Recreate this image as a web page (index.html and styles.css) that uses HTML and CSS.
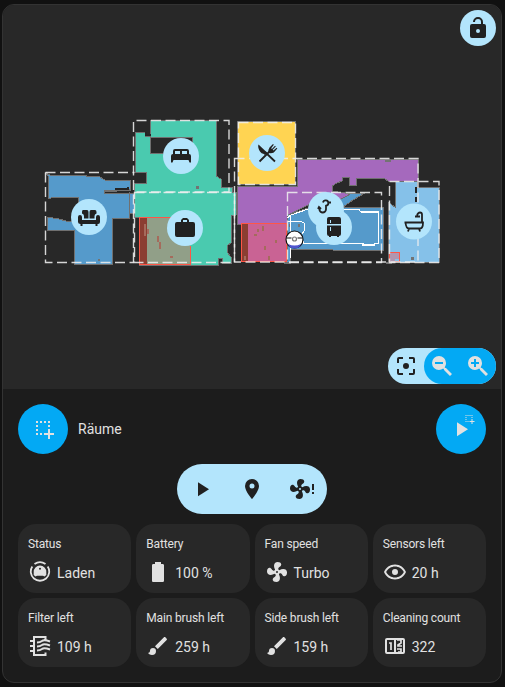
FILE: index.html
```
<!DOCTYPE html>
<html lang="de">
<head>
<meta charset="utf-8">
<title>Räume</title>
<link rel="stylesheet" href="styles.css">
</head>
<body>
<svg class="defs" width="0" height="0" aria-hidden="true">
  <symbol id="play" viewBox="0 0 24 24"><path d="M8 5.14v14l11-7z"/></symbol>
  <symbol id="fan" viewBox="0 0 24 24"><path d="M12,11A1,1 0 0,0 11,12A1,1 0 0,0 12,13A1,1 0 0,0 13,12A1,1 0 0,0 12,11M12.5,2C17,2 17.11,5.57 14.75,6.75C13.76,7.24 13.32,8.29 13.13,9.22C13.61,9.42 14.03,9.73 14.35,10.13C18.05,8.13 22.03,8.92 22.03,12.5C22.03,17 18.46,17.1 17.28,14.73C16.78,13.74 15.72,13.3 14.79,13.11C14.59,13.59 14.28,14 13.88,14.34C15.87,18.03 15.08,22 11.5,22C7,22 6.91,18.42 9.27,17.24C10.25,16.75 10.69,15.71 10.89,14.79C10.4,14.59 9.97,14.27 9.65,13.87C5.96,15.85 2,15.07 2,11.5C2,7 5.56,6.89 6.74,9.26C7.24,10.25 8.29,10.68 9.22,10.87C9.41,10.39 9.73,9.97 10.14,9.65C8.15,5.96 8.94,2 12.5,2Z"/></symbol>
  <symbol id="brush" viewBox="0 0 24 24"><path d="M20.71,4.63L19.37,3.29C19,2.9 18.35,2.9 17.96,3.29L9,12.25L11.75,15L20.71,6.04C21.1,5.65 21.1,5 20.71,4.63M7,14A3,3 0 0,0 4,17C4,18.31 2.84,19 2,19C2.92,20.22 4.5,21 6,21A4,4 0 0,0 10,17A3,3 0 0,0 7,14Z"/></symbol>
  <symbol id="select" viewBox="0 0 24 24"><path d="M5 4h2v2H5zM9 4h2v2H9zM13 4h2v2h-2zM17 4h2v2h-2zM5 8h2v2H5zM17 8h2v2h-2zM5 12h2v2H5zM17 12h2v4h4v2h-4v4h-2v-4h-4v-2h4zM5 16h2v2H5zM9 16h2v2H9z"/></symbol>
</svg>
<main class="card">
  <section class="map">
    <svg class="plan" viewBox="3 5 498 384">
      <g class="rooms">
        <path fill="#559acb" d="M45 172l5 3h36v1h12l7 4h25v9h-14v2h-12v2h31v20h-6v5h-17v46H74v-34H47v-13l12 2 7 2h12v-24H54l-6 2v-23z"/>
        <path fill="#4acaaf" fill-rule="evenodd" d="M150 120h66v56l5 3v8h11v5h4v23l-5 1v27l-4 3v6l4 5v6h-9v-5h-4v7h-79v-48h-5v-34h12v-11h-11v-40h10v4h5zM150 137v16h42v-16z"/>
        <path fill="#a569bd" d="M237 186h60v-27h121l1 22h-31l-4-3h-28v7h-7v-8h-7v4l-5 2-5 3v5l19 3-7 6-15-1-21 6-20 10v9h-51z"/>
        <path fill="#559acb" d="M288 215l20-7 28-6 16-9h13l-12 7-10 7h40v43h-50l-6-1h-37v13h-3z"/>
        <path fill="#85c1e9" d="M395 181h22v6h22v75h-51v-60l7 5z"/>
        <path fill="#ffd452" d="M237.500 121.500h58v63h-58z"/>
      </g>
      <path fill="none" stroke="#707070" d="M104 190.500h27M129.500 192v26"/>
      <path class="dust" d="M196 185.500h3v3h-3zM98 259h2v2h-2zM289 224h2v3h-2zM298 224h2v3h-2zM411 257h3v3h-3zM386 262h6v2h-6zM284 262h7v2h-7zM385 159h6v3h-6z"/>
      <path class="notch" d="M128 187v2h-13M146 132v3h5M416 187v6M416 197v5"/>
      <path fill="#8b3e32" d="M139.500 218h7v46h-7zM242 223.500h6v38h-6z"/>
      <path fill="#919f88" d="M146.500 218H190v46h-43.500z"/>
      <path fill="#c96394" d="M248 223.500h38.500v38H248z"/>
      <path class="marks" d="M145 224v12M148 229v5M158 236v6M160 242v7M170 256.500h3M263 226v5M258 232v-3M265 246v4M276 240v3M257 235h-3M269 260v-4M245 260v-4"/>
      <path class="zone" d="M190.500 245.500v19h-51v-47H173M241.500 223.500h45v38h-45zM389.500 252.500h10v9h-10z"/>
      <path fill="#b196b0" d="M390 253h9v6h-4v3h-5z"/>
      <path class="route" d="M287 218l4-3 17-6M343 209.500h16l2 2.500h17.500v31.500h-4v1.500h-11.500v-1.500H304l-3-8 3.500-5v-7l-3-2H288M290.500 216v42"/>
      <g class="bounds">
        <path d="M45.500 172.500h89M45.500 172.500v90H134"/>
        <path d="M133.500 262.500v-142h95.500V192h-94.500"/>
        <path d="M134.500 192.500h100v70h-100z"/>
        <path d="M238.500 122.500h57v62h-57z"/>
        <path d="M234.500 158.500H418v103.500H234.500z"/>
        <path d="M287.500 192.500h94v70h-94z"/>
        <path d="M389.500 181.500h49.500v81h-49.500z"/>
      </g>
      <g class="pins">
        <circle cx="89" cy="217" r="18"/><circle cx="181" cy="156" r="18"/><circle cx="185" cy="228" r="18"/><circle cx="267" cy="153" r="18"/><circle cx="326" cy="210" r="18"/><circle cx="334" cy="227" r="18"/><circle cx="414" cy="221.500" r="18"/>
      </g>
      <g class="glyphs">
        <g transform="translate(77 205)"><path d="M6 5h4q1.500 0 1.500 2v6.500H7V11q0-2-2-2.500V7q0-2 1-2zm8 0h4q1.500 0 1.500 2v1.500q-2 .5-2 2.500v2.500h-5V7q0-2 1.500-2zM3 10q2 0 2 2v3h14v-3q0-2 2-2t2 2v5q0 2-2 2h-.5v2h-2v-2h-13v2h-2v-2Q1 19 1 17v-5q0-2 2-2z"/></g>
        <g transform="translate(169 144)"><path fill-rule="evenodd" d="M4 10V7q0-2 2-2h12q2 0 2 2v3q2 0 2 2v6.500h-1.500L19.500 16h-15l-1 2.500H2V12q0-2 2-2zm2 0h5V7H6zm7 0h5V7h-5z"/></g>
        <path transform="translate(173 216)" fill-rule="evenodd" d="M10,2H14L16,4V6H20A2,2 0 0,1 22,8V19A2,2 0 0,1 20,21H4A2,2 0 0,1 2,19V8A2,2 0 0,1 4,6H8V4L10,2M10 4v2h4V4z"/>
        <g transform="translate(255 141)"><path d="M3.500 3.500l8.500 8-2 2.500q-1.500-2-3-1.500C4 10 2.500 6 3.500 3.500z"/><path class="line" d="M10 11l10 9.500M4.500 20.500L15 10"/><path d="M13.500 11.500q-.5-3 1-5L18 3l.8.8-2.600 3.400.7.700L20 4.700l.8.800-3.100 3.200.7.700 3.200-2.600.7.700-3.500 4q-2 1-5 .5z"/></g>
        <g transform="translate(313 194)"><path class="line" d="M10 8.500a2.700 2.700 0 1 1 3 3.200v3.500a3.300 3.300 0 0 1-6.600 0v-2M16 8.500h2M8 15l-2-2-1 2"/></g>
        <path transform="translate(322 215)" d="M7 2h10q2 0 2 2v5H5V4q0-2 2-2zM5 10.500h14V19q0 2-2 2v1h-2v-1H9v1H7v-1q-2 0-2-2z"/>
        <path class="cut" d="M330.500 220v3M330.500 227v4"/>
        <g transform="translate(402 209.500)"><path class="line" d="M2.500 13h18.500q0 6-3 6H7q-3 0-3.500-6M20 13V5q0-2-2-2t-3 3M13 7h5M7 19l-1 3M17 19l1 3"/></g>
      </g>
      <g class="robot"><circle cx="294.500" cy="239.500" r="8.500" fill="#fff"/><path fill="#4f55cf" stroke="none" d="M288 244q6.500 3 13 0-1.500 4.500-6.500 4.500t-6.500-4.500z"/><path d="M286.500 238h5M297.500 238h5"/><circle cx="294.500" cy="239" r="2" fill="#fff" stroke="#777"/></g>
    </svg>
    <button class="lock" aria-label="Lock"><svg viewBox="0 0 24 24"><path d="M18,8A2,2 0 0,1 20,10V20A2,2 0 0,1 18,22H6A2,2 0 0,1 4,20V10A2,2 0 0,1 6,8H15V6A3,3 0 0,0 12,3A3,3 0 0,0 9,6H7A5,5 0 0,1 12,1A5,5 0 0,1 17,6V8H18M12,17A2,2 0 0,0 14,15A2,2 0 0,0 12,13A2,2 0 0,0 10,15A2,2 0 0,0 12,17Z"/></svg></button>
    <div class="zoombar">
      <svg viewBox="0 0 24 24"><path d="M12 9a3 3 0 1 0 0 6 3 3 0 0 0 0-6M19,19H15V21H19A2,2 0 0,0 21,19V15H19M19,3H15V5H19V9H21V5A2,2 0 0,0 19,3M5,5H9V3H5A2,2 0 0,0 3,5V9H5M5,15H3V19A2,2 0 0,0 5,21H9V19H5V15Z"/></svg>
      <div class="zoomset">
        <svg viewBox="0 0 24 24"><path d="M9,2A7,7 0 0,1 16,9C16,10.570 15.500,12 14.610,13.190L15.410,14H16L22,20L20,22L14,16V15.410L13.190,14.610C12,15.500 10.570,16 9,16A7,7 0 0,1 2,9A7,7 0 0,1 9,2M5,8V10H13V8H5Z"/></svg>
        <svg viewBox="0 0 24 24"><path d="M9,2A7,7 0 0,1 16,9C16,10.570 15.500,12 14.610,13.190L15.410,14H16L22,20L20,22L14,16V15.410L13.190,14.610C12,15.500 10.570,16 9,16A7,7 0 0,1 2,9A7,7 0 0,1 9,2M8,5V8H5V10H8V13H10V10H13V8H10V5H8Z"/></svg>
      </div>
    </div>
  </section>
  <section class="controls">
    <div class="mode">
      <button class="round" aria-label="Auswahl"><svg viewBox="0 0 24 24"><use href="#select"/></svg></button>
      <span>Räume</span>
      <button class="round run" aria-label="Start"><svg viewBox="0 0 24 24"><use href="#play"/></svg><svg class="mini" viewBox="0 0 24 24"><use href="#select"/></svg></button>
    </div>
    <div class="actions">
      <svg viewBox="0 0 24 24"><use href="#play"/></svg>
      <svg viewBox="0 0 24 24"><path d="M12,11.500A2.500,2.500 0 0,1 9.500,9A2.500,2.500 0 0,1 12,6.500A2.500,2.500 0 0,1 14.500,9A2.500,2.500 0 0,1 12,11.500M12,2A7,7 0 0,0 5,9C5,14.250 12,22 12,22C12,22 19,14.250 19,9A7,7 0 0,0 12,2Z"/></svg>
      <svg viewBox="0 0 24 24"><use href="#fan" x="-2" width="24" height="24"/><path d="M22 7h2v6h-2zM22 15h2v2h-2z"/></svg>
    </div>
    <div class="tiles">
      <div class="tile"><h2>Status</h2><p><svg viewBox="0 0 24 24"><path d="M4.300 6.500A9.200 9.200 0 1 0 19.700 6.500M6.500 4a9.500 9.500 0 0 1 11 0" fill="none" stroke="currentColor" stroke-width="1.800"/><path fill-rule="evenodd" d="M12 5.500a6.300 6.300 0 0 1 6.300 6.500v3l-1.800 1.500-1.500-.7H9l-1.500.7L5.700 15v-3A6.300 6.300 0 0 1 12 5.500zm0 2.300a1 1 0 1 0 0 2 1 1 0 0 0 0-2z"/></svg>Laden</p></div>
      <div class="tile"><h2>Battery</h2><p><svg viewBox="0 0 24 24"><path d="M16.670,4H15V2H9V4H7.330A1.330,1.330 0 0,0 6,5.330V20.670C6,21.400 6.600,22 7.330,22H16.670A1.330,1.330 0 0,0 18,20.670V5.330C18,4.600 17.400,4 16.670,4Z"/></svg>100 %</p></div>
      <div class="tile"><h2>Fan speed</h2><p><svg viewBox="0 0 24 24"><use href="#fan"/></svg>Turbo</p></div>
      <div class="tile"><h2>Sensors left</h2><p><svg viewBox="0 0 24 24"><path d="M12,9A3,3 0 0,1 15,12A3,3 0 0,1 12,15A3,3 0 0,1 9,12A3,3 0 0,1 12,9M12,4.500C17,4.500 21.270,7.610 23,12C21.270,16.390 17,19.500 12,19.500C7,19.500 2.730,16.390 1,12C2.730,7.610 7,4.500 12,4.500M3.180,12C4.830,15.360 8.240,17.500 12,17.500C15.760,17.500 19.170,15.360 20.820,12C19.170,8.640 15.760,6.500 12,6.500C8.240,6.500 4.830,8.640 3.180,12Z"/></svg>20 h</p></div>
      <div class="tile"><h2>Filter left</h2><p><svg viewBox="0 0 24 24"><path d="M17.500 5.500V3H6v18h11.500v-2.500M2 7h4M2 12h4M2 17h4M9 8.500q3 0 5-1.500t8 .5M9 12.500q3 0 5-1.500t8 .5M9 16.500q3 0 5-1.500t8 .5" fill="none" stroke="currentColor" stroke-width="2"/></svg>109 h</p></div>
      <div class="tile"><h2>Main brush left</h2><p><svg viewBox="0 0 24 24"><use href="#brush"/></svg>259 h</p></div>
      <div class="tile"><h2>Side brush left</h2><p><svg viewBox="0 0 24 24"><use href="#brush"/></svg>159 h</p></div>
      <div class="tile"><h2>Cleaning count</h2><p><svg viewBox="0 0 24 24"><path d="M4 4h16q2 0 2 2v12q0 2-2 2H4q-2 0-2-2V6q0-2 2-2zm0 2v12h7V6zm9 0v12h7V6z" fill-rule="evenodd"/><path d="M6 9h2v7M14 6h4v3l-3 2v1h4M14 15h4v3h-3" fill="none" stroke="currentColor" stroke-width="1.700"/></svg>322</p></div>
    </div>
  </section>
</main>
</body>
</html>
```
FILE: styles.css
```
* { box-sizing: border-box; }
body {
  margin: 0;
  padding: 4px 3px 4px 2px;
  height: 687px;
  background: #111;
  color: #e1e1e1;
  font-family: Roboto, sans-serif;
}
.defs { position: absolute; }
svg { fill: currentColor; }
button { border: 0; padding: 0; }
.card {
  height: 679px;
  border: 1px solid #333;
  border-radius: 12px;
  overflow: hidden;
  background: #1c1c1c;
}
.map { position: relative; height: 384px; background: #282828; }
.plan { display: block; width: 498px; height: 384px; shape-rendering: crispEdges; }
.rooms path { stroke: #707070; stroke-width: 1; }
.dust { fill: #737373; }
.notch { fill: none; stroke: #252525; stroke-width: 2; }
.marks { fill: none; stroke: #a56b5c; stroke-width: 2; }
.zone { fill: none; stroke: #ff5647; stroke-width: 1; }
.route { fill: none; stroke: #fff; stroke-width: 1.1; }
.bounds { fill: none; stroke: #eee; stroke-opacity: .88; stroke-width: 1.4; stroke-dasharray: 10 4.500; shape-rendering: auto; }
.pins { fill: #b3e5fc; shape-rendering: auto; }
.glyphs { fill: #212121; shape-rendering: auto; }
.line { fill: none; stroke: #212121; stroke-width: 1.8; }
.cut { stroke: #b3e5fc; }
.robot { fill: none; stroke: #111; stroke-width: 1.2; shape-rendering: auto; }
.lock {
  position: absolute;
  top: 5px;
  right: 5px;
  width: 36px;
  height: 36px;
  border-radius: 50%;
  display: grid;
  place-items: center;
  color: #212121;
  background: #b3e5fc;
}
.lock svg, .zoombar svg { width: 24px; height: 24px; }
.zoombar {
  position: absolute;
  right: 5px;
  bottom: 5px;
  height: 36px;
  padding-left: 6px;
  display: flex;
  align-items: center;
  gap: 6px;
  color: #212121;
  background: #b3e5fc;
  border-radius: 18px;
}
.zoomset {
  display: flex;
  align-items: center;
  gap: 12px;
  height: 36px;
  padding: 0 6px;
  border-radius: 18px;
  background: #03a9f4;
  color: #e1e1e1;
}
.controls { padding: 15px; }
.mode { display: flex; align-items: center; gap: 10px; height: 50px; font-size: 14px; }
.round {
  position: relative;
  width: 50px;
  height: 50px;
  display: grid;
  place-items: center;
  border-radius: 50%;
  color: #e1e1e1;
  background: #03a9f4;
}
.round svg { width: 24px; height: 24px; }
.run { margin-left: auto; }
.round .mini { position: absolute; left: 27px; top: 9px; width: 12px; height: 12px; }
.actions {
  display: flex;
  align-items: center;
  justify-content: space-around;
  width: 150px;
  height: 50px;
  margin: 10px auto;
  border-radius: 25px;
  background: #b3e5fc;
  color: #212121;
}
.actions svg { width: 24px; height: 24px; overflow: visible; }
.tiles { display: grid; grid-template-columns: repeat(4, 1fr); gap: 5px; }
.tile { height: 69px; padding: 13px 10px 0; border-radius: 18px; background: #282828; }
.tile h2 { margin: 0; font-size: 12px; font-weight: 400; letter-spacing: -.16px; line-height: 14px; white-space: nowrap; }
.tile p { display: flex; align-items: center; gap: 5px; margin: 10px 0 0; height: 24px; font-size: 14px; line-height: 24px; }
.tile svg { width: 24px; height: 24px; margin-top: -3px; }
```
